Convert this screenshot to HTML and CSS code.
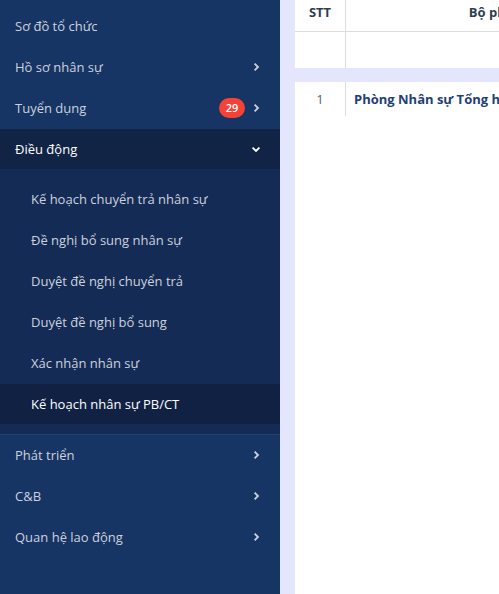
FILE: index.html
```html
<!DOCTYPE html>
<html lang="vi">
<head>
<meta charset="utf-8">
<meta name="viewport" content="width=device-width, initial-scale=1">
<title>Kế hoạch nhân sự PB/CT</title>
<link rel="stylesheet" href="styles.css">
</head>
<body>
<div class="app">
  <nav class="sidebar">
    <ul class="menu">
      <li><a class="item" href="#"><span class="label">Sơ đồ tổ chức</span></a></li>
      <li><button class="item" type="button" aria-expanded="false"><span class="label">Hồ sơ nhân sự</span><svg class="chevron" viewBox="0 0 10 10" aria-hidden="true"><path d="M3.6 1.6 7 5 3.6 8.4"/></svg></button></li>
      <li><button class="item" type="button" aria-expanded="false"><span class="label">Tuyển dụng</span><span class="badge">29</span><svg class="chevron" viewBox="0 0 10 10" aria-hidden="true"><path d="M3.6 1.6 7 5 3.6 8.4"/></svg></button></li>
      <li><button class="item open" type="button" aria-expanded="true"><span class="label">Điều động</span><svg class="chevron" viewBox="0 0 10 10" aria-hidden="true"><path d="M1.6 3.6 5 7 8.4 3.6"/></svg></button></li>
    </ul>
    <ul class="menu submenu">
      <li><a class="item" href="#">Kế hoạch chuyển trả nhân sự</a></li>
      <li><a class="item" href="#">Đề nghị bổ sung nhân sự</a></li>
      <li><a class="item" href="#">Duyệt đề nghị chuyển trả</a></li>
      <li><a class="item" href="#">Duyệt đề nghị bổ sung</a></li>
      <li><a class="item" href="#">Xác nhận nhân sự</a></li>
      <li><a class="item current" href="#" aria-current="page">Kế hoạch nhân sự PB/CT</a></li>
    </ul>
    <ul class="menu menu-rest">
      <li><button class="item" type="button" aria-expanded="false"><span class="label">Phát triển</span><svg class="chevron" viewBox="0 0 10 10" aria-hidden="true"><path d="M3.6 1.6 7 5 3.6 8.4"/></svg></button></li>
      <li><button class="item" type="button" aria-expanded="false"><span class="label">C&amp;B</span><svg class="chevron" viewBox="0 0 10 10" aria-hidden="true"><path d="M3.6 1.6 7 5 3.6 8.4"/></svg></button></li>
      <li><button class="item" type="button" aria-expanded="false"><span class="label">Quan hệ lao động</span><svg class="chevron" viewBox="0 0 10 10" aria-hidden="true"><path d="M3.6 1.6 7 5 3.6 8.4"/></svg></button></li>
    </ul>
  </nav>
  <main class="content">
    <table class="grid">
      <colgroup><col class="col-index"><col class="col-unit"></colgroup>
      <thead>
        <tr class="head"><th scope="col">STT</th><th scope="col">Bộ phận</th></tr>
        <tr class="filter"><td></td><td></td></tr>
      </thead>
      <tbody>
        <tr class="spacer"><td colspan="2"></td></tr>
        <tr class="row"><td class="index">1</td><td class="unit">Phòng Nhân sự Tổng hợp</td></tr>
      </tbody>
    </table>
  </main>
</div>
</body>
</html>
```
FILE: styles.css
```css
* {
  box-sizing: border-box;
}

body {
  margin: 0;
  font: 13px/20px "Open Sans", "Noto Sans", sans-serif;
  background: #e4e6fe;
}

.app {
  display: flex;
  gap: 15px;
  min-height: 100vh;
}

.sidebar {
  flex: 0 0 280px;
  padding-top: 6px;
  background: #163464;
}

.menu {
  display: flex;
  flex-direction: column;
  gap: 1px;
  margin: 0;
  padding: 0;
  list-style: none;
}

.item {
  display: flex;
  align-items: center;
  gap: 6px;
  width: 100%;
  height: 40px;
  padding: 0 19px 0 15px;
  border: 0;
  background: none;
  color: #ccd2dc;
  font: inherit;
  text-align: left;
  text-decoration: none;
}

.label {
  flex: 1;
}

.item.open {
  background: #112446;
  color: #fff;
}

.submenu {
  padding: 10px 0;
  background: #142b56;
}

.submenu .item {
  padding-left: 31px;
}

.submenu .current {
  background: #102144;
  color: #fff;
}

.menu-rest {
  border-top: 1px solid #24406f;
}

.badge {
  width: 26px;
  border-radius: 10px;
  background: #f44336;
  color: #fff;
  font-size: 11px;
  font-weight: 600;
  text-align: center;
}

.chevron {
  width: 10px;
  height: 10px;
  fill: none;
  stroke: currentColor;
  stroke-width: 1.8;
}

.content {
  flex: 1;
  min-width: 0;
  overflow: hidden;
  background: #fff;
}

.grid {
  width: 350px;
  border-collapse: separate;
  border-spacing: 0;
  table-layout: fixed;
}

.col-index {
  width: 51px;
}

.grid th,
.grid td {
  padding: 0 8px;
  color: #2c3e50;
}

.grid tr > :first-child {
  border-right: 1px solid #ddd;
}

.grid .head th {
  height: 32px;
  padding-bottom: 8px;
  border-bottom: 1px solid #ddd;
}

.filter td {
  height: 36px;
}

.grid .spacer td {
  height: 14px;
  padding: 0;
  border: 0;
  background: #e4e6fe;
}

.row td {
  height: 34px;
}

.grid .index {
  color: #50637e;
  text-align: center;
}

.grid .unit {
  color: #1f3f77;
  font-weight: 700;
}
```
